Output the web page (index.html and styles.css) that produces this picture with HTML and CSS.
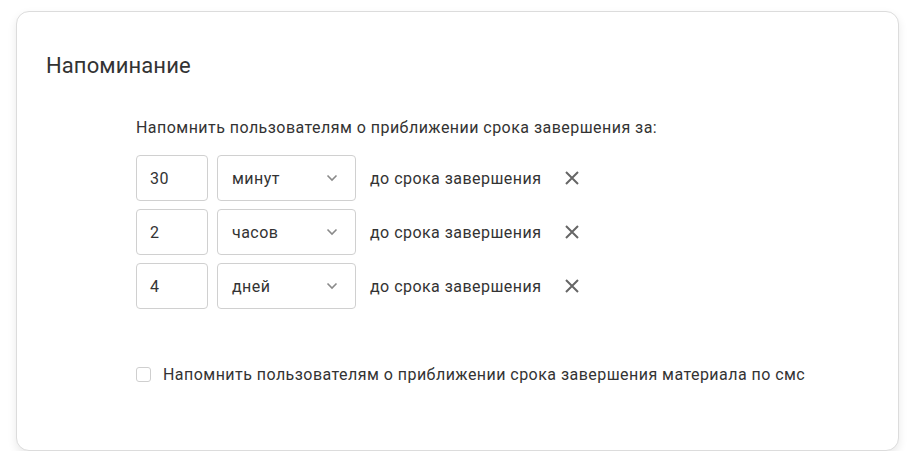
FILE: index.html
```html
<!DOCTYPE html>
<html lang="ru">
<head>
<meta charset="utf-8">
<link rel="stylesheet" href="styles.css">
</head>
<body>
<div class="card">
  <h2 class="title">Напоминание</h2>
  <div class="content">
    <p class="lead">Напомнить пользователям о приближении срока завершения за:</p>
    <div class="rows">
      <div class="row">
        <div class="num">30</div>
        <div class="select"><span>минут</span><svg class="chev" viewBox="0 0 12 8" width="12" height="8"><path d="M1.5 1.5 L6 6 L10.5 1.5" fill="none" stroke="#8a8a8a" stroke-width="1.6"/></svg></div>
        <span class="suffix">до срока завершения</span>
        <svg class="close" viewBox="0 0 16 16" width="16" height="16"><path d="M2 2 L14 14 M14 2 L2 14" stroke="#666" stroke-width="2" fill="none"/></svg>
      </div>
      <div class="row">
        <div class="num">2</div>
        <div class="select"><span>часов</span><svg class="chev" viewBox="0 0 12 8" width="12" height="8"><path d="M1.5 1.5 L6 6 L10.5 1.5" fill="none" stroke="#8a8a8a" stroke-width="1.6"/></svg></div>
        <span class="suffix">до срока завершения</span>
        <svg class="close" viewBox="0 0 16 16" width="16" height="16"><path d="M2 2 L14 14 M14 2 L2 14" stroke="#666" stroke-width="2" fill="none"/></svg>
      </div>
      <div class="row">
        <div class="num">4</div>
        <div class="select"><span>дней</span><svg class="chev" viewBox="0 0 12 8" width="12" height="8"><path d="M1.5 1.5 L6 6 L10.5 1.5" fill="none" stroke="#8a8a8a" stroke-width="1.6"/></svg></div>
        <span class="suffix">до срока завершения</span>
        <svg class="close" viewBox="0 0 16 16" width="16" height="16"><path d="M2 2 L14 14 M14 2 L2 14" stroke="#666" stroke-width="2" fill="none"/></svg>
      </div>
    </div>
    <label class="check"><span class="box"></span><span>Напомнить пользователям о приближении срока завершения материала по смс</span></label>
  </div>
</div>
</body>
</html>
```
FILE: styles.css
```css
html, body {
  margin: 0;
  padding: 0;
  background: #ffffff;
}
body {
  font-family: Roboto, "Noto Sans", sans-serif;
  color: #333333;
  padding: 11px 0 0 16px;
}
.card {
  box-sizing: border-box;
  width: 883px;
  height: 440px;
  border: 1px solid #dcdcdc;
  border-radius: 13px;
  box-shadow: 0 4px 10px rgba(0, 0, 0, 0.09);
  background: #fff;
  padding: 41px 29px 0 29px;
}
.title {
  margin: 0;
  font-size: 22px;
  font-weight: 400;
  line-height: 26px;
  color: #333;
  letter-spacing: 0.1px;
}
.content {
  margin-left: 90px;
  margin-top: 39px;
  font-size: 16px;
  letter-spacing: 0.46px;
}
.lead {
  margin: 0;
  line-height: 20px;
  color: #333;
}
.rows {
  margin-top: 17px;
  display: flex;
  flex-direction: column;
  gap: 8px;
}
.row {
  display: flex;
  align-items: center;
  height: 46px;
}
.num {
  box-sizing: border-box;
  width: 72px;
  height: 46px;
  border: 1px solid #d0d0d0;
  border-radius: 4px;
  padding-left: 13px;
  display: flex;
  align-items: center;
}
.select {
  box-sizing: border-box;
  width: 139px;
  height: 46px;
  margin-left: 9px;
  border: 1px solid #d0d0d0;
  border-radius: 4px;
  padding: 0 17px 0 14px;
  display: flex;
  align-items: center;
  justify-content: space-between;
}
.suffix {
  margin-left: 14px;
}
.close {
  margin-left: 23px;
}
.check {
  display: flex;
  align-items: center;
  margin-top: 56px;
}
.box {
  box-sizing: border-box;
  width: 15px;
  height: 15px;
  border: 1px solid #cfcfcf;
  border-radius: 3px;
  margin-right: 12px;
}
```
